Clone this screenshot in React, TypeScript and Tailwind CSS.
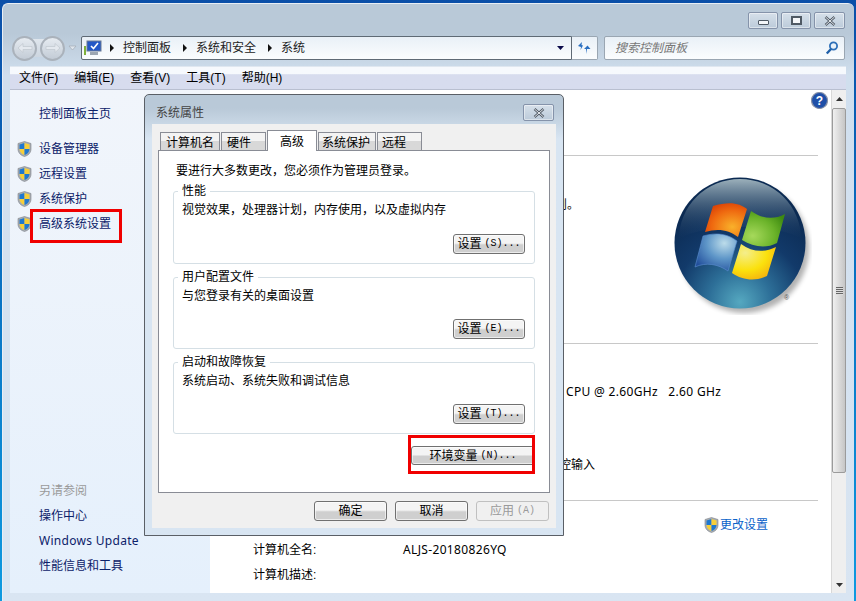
const sans = "font-['Liberation_Sans','Noto_Sans_CJK_SC',sans-serif]";
const latin = "font-['Noto_Sans','Noto_Sans_CJK_SC',sans-serif]";

function Shield({ className = "" }: { className?: string }) {
  return (
    <svg width="15" height="16" viewBox="0 0 15 16" className={className}>
      <path d="M7.5 0.5 L14 2.5 V8 C14 12 11 14.5 7.5 15.5 C4 14.5 1 12 1 8 V2.5 Z" fill="#a8adb3" stroke="#7d8288" strokeWidth="0.6" />
      <path d="M7.5 2 V8 H2.5 V3.4 Z" fill="#1f78d0" />
      <path d="M7.5 2 L12.5 3.4 V8 H7.5 Z" fill="#f7cf3a" />
      <path d="M2.5 8 H7.5 V14 C5 13.2 2.7 11.2 2.5 8 Z" fill="#f7cf3a" />
      <path d="M7.5 8 H12.5 C12.3 11.2 10 13.2 7.5 14 Z" fill="#1f78d0" />
    </svg>
  );
}

function Circle({ dir }: { dir: "l" | "r" }) {
  return (
    <div className="w-[25px] h-[25px] shrink-0 rounded-full border-2 border-[#aab2bb] bg-gradient-to-b from-[#e6ebf1] to-[#c3ccd6] flex items-center justify-center">
      <svg width="16" height="12" viewBox="0 0 16 12">
        <path d={dir === "l" ? "M1 6 L6 1.5 V4.5 H15 V7.5 H6 V10.5 Z" : "M15 6 L10 1.5 V4.5 H1 V7.5 H10 V10.5 Z"} fill="#e4e9ef" stroke="#c0c7cf" strokeWidth="0.7" />
      </svg>
    </div>
  );
}

function Caret() {
  return (
    <svg width="6" height="8" viewBox="0 0 6 8" className="shrink-0">
      <path d="M1 0 L5 4 L1 8 Z" fill="#111" />
    </svg>
  );
}

function WinBtn({ w = "w-[30px]", children }: { w?: string; children: React.ReactNode }) {
  return (
    <div className={`${w} h-[17px] rounded-[2px] border border-[#8593aa] bg-gradient-to-b from-[#d6e0ea] to-[#bccbda] flex items-center justify-center shadow-[inset_0_0_0_1px_rgba(255,255,255,0.45)]`}>
      {children}
    </div>
  );
}

function XIcon() {
  return (
    <svg width="12" height="10" viewBox="0 0 12 10">
      <path d="M1.5 1 L10.5 9 M10.5 1 L1.5 9" stroke="#4f5964" strokeWidth="2.4" />
      <path d="M1.5 1 L10.5 9 M10.5 1 L1.5 9" stroke="#f3f6f9" strokeWidth="0.9" />
    </svg>
  );
}

function DlgButton({ cjk, key_, w, h = "h-[20px]", disabled }: { cjk: string; key_?: string; w: string; h?: string; disabled?: boolean }) {
  return (
    <div
      className={`${w} ${h} rounded-[3px] border flex items-center justify-center text-[12px] leading-none ${
        disabled
          ? "border-[#c0c0c0] bg-[#f0f0f0] text-[#9a9a9a]"
          : "border-[#707070] bg-gradient-to-b from-[#f4f4f4] from-45% to-[#cfcfcf] to-55% text-black shadow-[inset_0_0_0_1px_rgba(255,255,255,0.6)]"
      }`}
    >
      <span>{cjk}</span>
      {key_ ? <span className="ml-[3px] text-[10px] font-['Liberation_Mono',monospace]">{key_}</span> : null}
    </div>
  );
}

function Group({ title, text, cjk, key_, h }: { title: string; text: string; cjk: string; key_: string; h: string }) {
  return (
    <div className={`relative ${h} border border-[#d5dfe5] rounded-[3px] px-[8px]`}>
      <div className="absolute -top-[9px] left-[4px] bg-white px-[4px] text-[12px] leading-[16px]">{title}</div>
      <div className="pt-[10px] text-[12px] leading-[16px]">{text}</div>
      <div className="absolute right-[9px] bottom-[9px]">
        <DlgButton w="w-[72px]" cjk={cjk} key_={key_} />
      </div>
    </div>
  );
}

function Tab({ label, w, pl = "pl-[5px]", active }: { label: string; w: string; pl?: string; active?: boolean }) {
  return active ? (
    <div className={`${w} h-[21px] border border-b-0 border-[#898c95] bg-white -mb-px z-10 text-center text-[12px] leading-[23px] relative`}>{label}</div>
  ) : (
    <div className={`${w} h-[18px] border border-b-0 border-[#898c95] bg-gradient-to-b from-[#f3f3f3] from-45% to-[#d8d8d8] to-50% text-[12px] leading-[21px] ${pl}`}>{label}</div>
  );
}

function Logo() {
  return (
    <svg width="138" height="138" viewBox="0 0 138 138">
      <defs>
        <radialGradient id="orb" cx="50%" cy="95%" r="80%">
          <stop offset="0%" stopColor="#55a8c0" />
          <stop offset="30%" stopColor="#2d6f98" />
          <stop offset="62%" stopColor="#123a6a" />
          <stop offset="100%" stopColor="#0b2a52" />
        </radialGradient>
        <linearGradient id="gloss" x1="0" y1="0" x2="0" y2="1">
          <stop offset="0%" stopColor="#a3b7c0" stopOpacity="0.95" />
          <stop offset="100%" stopColor="#27466a" stopOpacity="0" />
        </linearGradient>
        <radialGradient id="red" cx="65%" cy="70%" r="80%">
          <stop offset="0%" stopColor="#f9b12a" />
          <stop offset="60%" stopColor="#ef6a10" />
          <stop offset="100%" stopColor="#d93c05" />
        </radialGradient>
        <radialGradient id="green" cx="25%" cy="70%" r="85%">
          <stop offset="0%" stopColor="#a6d95b" />
          <stop offset="60%" stopColor="#6bb32a" />
          <stop offset="100%" stopColor="#3d8a10" />
        </radialGradient>
        <radialGradient id="blue" cx="70%" cy="25%" r="85%">
          <stop offset="0%" stopColor="#bcdcea" />
          <stop offset="50%" stopColor="#5e96c8" />
          <stop offset="100%" stopColor="#224f9c" />
        </radialGradient>
        <radialGradient id="yellow" cx="30%" cy="25%" r="90%">
          <stop offset="0%" stopColor="#f4ee8c" />
          <stop offset="55%" stopColor="#fbe10d" />
          <stop offset="100%" stopColor="#f3a70f" />
        </radialGradient>
        <filter id="sh" x="-10%" y="-10%" width="125%" height="125%">
          <feGaussianBlur stdDeviation="2.5" />
        </filter>
      </defs>
      <circle cx="70" cy="71" r="65" fill="#000" opacity="0.3" filter="url(#sh)" />
      <circle cx="66" cy="66" r="65.5" fill="url(#orb)" />
      <path d="M5 62 A61 60 0 0 1 127 62 C105 46 30 46 5 62 Z" fill="url(#gloss)" />
      <path d="M39 29 C55 24 66 26 73 32 L64 60 C55 53 44 51 31 55 Z" fill="url(#red)" />
      <path d="M77 34 C88 42 100 43 111 37 L103 66 C92 72 79 70 68 63 Z" fill="url(#green)" />
      <path d="M29 59 C43 55 54 57 63 64 L54 94 C44 87 32 85 21 90 Z" fill="url(#blue)" stroke="#5d8fd0" strokeWidth="0.6" />
      <path d="M67 67 C78 75 90 76 102 70 L93 99 C81 105 68 103 58 96 Z" fill="url(#yellow)" />
    </svg>
  );
}

export default function App() {
  return (
    <div className={`relative w-[856px] h-[601px] overflow-hidden bg-gradient-to-b from-[#0b4fa8] to-[#0f9ae0] pl-[2px] pt-[3px] text-[12px] text-black ${sans}`}>
      <div className="w-[852px] h-[598px] rounded-t-[6px] bg-gradient-to-b from-[#b9c9d8] from-5% via-[#d0dfee] via-12% to-[#d9e5f2] flex flex-col border-t border-l border-[#e8eef5]">
        {/* caption buttons */}
        <div className="h-[8px] shrink-0" />
        <div className="flex justify-end gap-[3px] pr-[9px] h-[17px] shrink-0">
          <WinBtn>
            <div className="w-[11px] h-[5px] border border-[#4f5964] bg-[#f4f6f9] rounded-[1px] mt-[4px]" />
          </WinBtn>
          <WinBtn>
            <div className="w-[11px] h-[9px] border-2 border-[#4f5964] bg-[#f4f6f9]" />
          </WinBtn>
          <WinBtn w="w-[31px]">
            <XIcon />
          </WinBtn>
        </div>
        {/* address */}
        <div className="h-[7px] shrink-0" />
        <div className="h-[24px] shrink-0 flex items-center pl-[9px] pr-[9px]">
          <div className="w-[53px] h-[18px] rounded-full bg-gradient-to-b from-[#dfe6ed] to-[#cdd6e0] flex items-center justify-between">
            <Circle dir="l" />
            <Circle dir="r" />
          </div>
          <svg width="9" height="6" viewBox="0 0 9 6" className="ml-[3px]">
            <path d="M1 1 L8 1 L4.5 5 Z" fill="#dfe6ed" stroke="#a3abb4" strokeWidth="0.7" />
          </svg>
          <div className="ml-[4px] w-[491px] h-[24px] border border-[#5f6a75] rounded-l-[2px] bg-gradient-to-b from-[#e9f0f7] to-[#fbfdfe] flex items-center pl-[2px]">
            <svg width="18" height="17" viewBox="0 0 18 17" className="shrink-0 mr-[7px]">
              <rect x="0" y="6" width="2" height="9" fill="#7fb13a" />
              <rect x="3" y="1" width="14" height="10" fill="#2458c7" stroke="#6b7b93" strokeWidth="1" />
              <path d="M7 6 L9.5 8.5 L14 3" stroke="#fff" strokeWidth="1.6" fill="none" />
              <rect x="6" y="12" width="8" height="3" fill="#9da7b2" />
            </svg>
            <Caret />
            <span className="ml-[8px] text-[12px] text-[#222]">控制面板</span>
            <span className="ml-[11px]"><Caret /></span>
            <span className="ml-[8px] text-[12px] text-[#222]">系统和安全</span>
            <span className="ml-[11px]"><Caret /></span>
            <span className="ml-[8px] text-[12px] text-[#222]">系统</span>
            <svg width="7" height="4" viewBox="0 0 7 4" className="ml-auto mr-[7px]">
              <path d="M0 0 H7 L3.5 4 Z" fill="#0a0a4a" />
            </svg>
          </div>
          <div className="w-[26px] h-[24px] border border-l-0 border-[#9aa6b2] rounded-r-[2px] bg-gradient-to-b from-[#e9f0f7] to-[#fbfdfe] flex items-center justify-center">
            <svg width="15" height="14" viewBox="0 0 15 14">
              <path d="M5 1 L1 5 L4 6 L3.5 9 L6 4.5 L4.5 4 Z" fill="#2a6fc0" />
              <path d="M10 13 L10 8 L13.5 8 L10.5 4.5 L7 8 L9 8 Z" fill="#2a6fc0" />
            </svg>
          </div>
          <div className="ml-[6px] w-[241px] h-[24px] border border-[#9aa6b2] rounded-[2px] bg-gradient-to-b from-[#e9f0f7] to-[#fbfdfe] flex items-center pl-[10px] pr-[5px]">
            <span className="italic text-[12px] text-[#777]">搜索控制面板</span>
            <svg width="14" height="14" viewBox="0 0 14 14" className="ml-auto">
              <circle cx="8.5" cy="5" r="3.6" fill="#e9f2fa" stroke="#2d6fb8" strokeWidth="1.8" />
              <path d="M6 8 L1.8 12.5" stroke="#1f5fa8" strokeWidth="2.4" />
            </svg>
          </div>
        </div>
        <div className="h-[6px] shrink-0" />
        {/* window client */}
        <div className="ml-[7px] mr-[8px] flex-1 min-h-0 flex flex-col">
          {/* menu */}
          <div className="h-[24px] shrink-0 border-t border-b border-t-[#dfe7f0] border-b-[#b9bfd0] bg-gradient-to-b from-[#f6f9fd] from-30% to-[#d7dcee] to-35% flex items-center pl-[9px] gap-[16px] text-[12px]">
            <span>文件(F)</span>
            <span>编辑(E)</span>
            <span>查看(V)</span>
            <span>工具(T)</span>
            <span>帮助(H)</span>
          </div>
          <div className="flex-1 min-h-0 flex mb-[8px]">
            {/* sidebar */}
            <div className="w-[200px] shrink-0 bg-gradient-to-b from-[#f1f5fb] to-[#e5f0fc] flex flex-col pl-[9px] text-[12px] text-[#0c2169]">
              <div className="pl-[20px] pt-[16px] leading-[16px]">控制面板主页</div>
              <div className="flex flex-col gap-[9px] mt-[19px]">
                {["设备管理器", "远程设置", "系统保护", "高级系统设置"].map((t) => (
                  <div key={t} className="flex items-center h-[16px]">
                    <Shield className="-ml-[2px] mr-[7px] shrink-0" />
                    <span>{t}</span>
                  </div>
                ))}
              </div>
              <div className="mt-auto pl-[20px] pb-[19px] flex flex-col gap-[9px] leading-[16px]">
                <span className="text-[#9a9a9a]">另请参阅</span>
                <span>操作中心</span>
                <span className={`text-[12px] tracking-[0.3px] ${latin}`}>Windows Update</span>
                <span>性能信息和工具</span>
              </div>
            </div>
            {/* main */}
            <div className="flex-1 bg-white flex min-w-0">
              <div className="flex-1 relative min-w-0 overflow-hidden">
                <div className="flex flex-col h-full">
                  <div className="flex justify-end pr-[3px] pt-[2px]">
                    <svg width="17" height="17" viewBox="0 0 17 17">
                      <circle cx="8.5" cy="8.5" r="8" fill="#1f4fa8" stroke="#8a93a8" strokeWidth="1.2" />
                      <text x="8.5" y="13" textAnchor="middle" fontSize="12" fontWeight="700" fill="#fff" fontFamily="Liberation Sans">?</text>
                    </svg>
                  </div>
                  <div className="mt-[46px] mr-[13px] border-t border-[#c8c8c8]" />
                  <div className="pl-[345px] mt-[41px] text-[12px] leading-[16px] text-[#111]">则。</div>
                  <div className="mt-[130px] mr-[13px] border-t border-[#c8c8c8]" />
                  <div className={`pl-[356px] mt-[40px] text-[12px] leading-[16px] whitespace-pre tracking-[0.33px] ${latin}`}>CPU @ 2.60GHz   2.60 GHz</div>
                  <div className="pl-[349px] mt-[57px] text-[12px] leading-[16px] whitespace-nowrap">控输入</div>
                  <div className="mt-[27px] mr-[13px] border-t border-[#c8c8c8]" />
                  <div className="flex justify-end pr-[63px] mt-[16px] items-center h-[16px] text-[#0a62c9]">
                    <Shield className="mr-px" />
                    <span>更改设置</span>
                  </div>
                  <div className="pl-[43px] mt-[9px] flex text-[12px] leading-[16px]">
                    <span className="w-[150px]">计算机全名:</span>
                    <span className={`tracking-[0.35px] ${latin}`}>ALJS-20180826YQ</span>
                  </div>
                  <div className="pl-[43px] mt-[9px] text-[12px] leading-[16px]">计算机描述:</div>
                </div>
                <div className="absolute left-[464px] top-[87px]">
                  <Logo />
                  <div className="absolute left-[110px] top-[116px] text-[7px] leading-[10px] text-[#555]">®</div>
                </div>
              </div>
              {/* scrollbar */}
              <div className="w-[15px] shrink-0 bg-[#efefef] border-l border-[#d8d8d8] flex flex-col">
                <div className="h-[18px] shrink-0 flex items-center justify-center">
                  <svg width="7" height="4" viewBox="0 0 7 4"><path d="M0 4 H7 L3.5 0 Z" fill="#333" /></svg>
                </div>
                <div className="h-[365px] shrink-0 border border-[#9b9b9b] rounded-[2px] bg-gradient-to-r from-[#f0f0f0] to-[#c6c6c6] flex items-center justify-center">
                  <div className="w-[7px] h-[8px] bg-[repeating-linear-gradient(#666_0,#666_1px,#ddd_1px,#ddd_2px)]" />
                </div>
                <div className="flex-1" />
                <div className="h-[17px] shrink-0 flex items-center justify-center">
                  <svg width="7" height="4" viewBox="0 0 7 4"><path d="M0 0 H7 L3.5 4 Z" fill="#333" /></svg>
                </div>
              </div>
            </div>
          </div>
        </div>
      </div>

      {/* Dialog: a window lying over the page */}
      <div className="absolute left-[144px] top-[94px] w-[420px] h-[442px] border border-[#5a5f66] rounded-t-[5px] bg-gradient-to-b from-[#b9c9d8] from-3% to-[#d8e5f2] to-10% flex flex-col px-[7px] pb-[7px]">
        <div className="h-[29px] shrink-0 flex items-start justify-between pl-[4px]">
          <span className="block mt-[10px] leading-[16px] text-[12px] text-[#444]">系统属性</span>
          <div className="mr-[2px] mt-[9px]">
            <WinBtn w="w-[31px]"><XIcon /></WinBtn>
          </div>
        </div>
        <div className="flex-1 min-h-0 bg-[#f0f0f0] px-[6px] pt-[6px] flex flex-col">
          <div className="flex items-end pl-[2px] gap-px h-[20px] shrink-0">
            <Tab label="计算机名" w="w-[60px]" />
            <Tab label="硬件" w="w-[45px]" />
            <Tab label="高级" w="w-[50px]" active />
            <Tab label="系统保护" w="w-[58px]" pl="pl-[3px]" />
            <Tab label="远程" w="w-[45px]" pl="pl-[4px]" />
          </div>
          <div className="h-[343px] shrink-0 border border-[#898c95] bg-white px-[14px] flex flex-col">
            <div className="pt-[12px] pl-[3px] text-[12px] leading-[16px]">{"要进行大多数更改\uFF0C您必须作为管理员登录。"}</div>
            <div className="mt-[12px] flex flex-col gap-[13px]">
              <Group h="h-[73px]" title="性能" text={"视觉效果\uFF0C处理器计划\uFF0C内存使用\uFF0C以及虚拟内存"} cjk="设置" key_="(S)..." />
              <Group h="h-[72px]" title="用户配置文件" text="与您登录有关的桌面设置" cjk="设置" key_="(E)..." />
              <Group h="h-[72px]" title="启动和故障恢复" text="系统启动、系统失败和调试信息" cjk="设置" key_="(T)..." />
            </div>
            <div className="flex justify-end mt-[12px]">
              <DlgButton w="w-[124px]" h="h-[19px]" cjk="环境变量" key_="(N)..." />
            </div>
          </div>
          <div className="flex justify-end gap-[8px] pr-[1px] mt-[8px]">
            <DlgButton w="w-[73px]" cjk="确定" />
            <DlgButton w="w-[73px]" cjk="取消" />
            <DlgButton w="w-[73px]" cjk="应用" key_="(A)" disabled />
          </div>
        </div>
      </div>

      {/* Red annotation boxes drawn over the screenshot */}
      <div className="absolute left-[30px] top-[209px] w-[92px] h-[34px] border-[3px] border-[#f00000]" />
      <div className="absolute left-[408px] top-[435px] w-[127px] h-[39px] border-[3px] border-[#f00000]" />
    </div>
  );
}
